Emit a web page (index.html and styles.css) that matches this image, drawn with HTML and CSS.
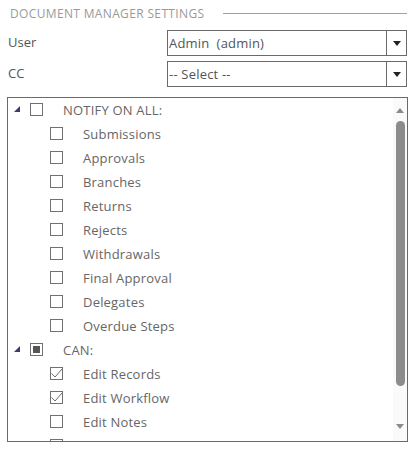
FILE: index.html
```html
<!DOCTYPE html>
<html>
<head>
<meta charset="utf-8">
<link rel="stylesheet" href="styles.css">
</head>
<body>
<div class="page">
  <div class="section-head">
    <span class="section-title">DOCUMENT MANAGER SETTINGS</span>
    <span class="section-line"></span>
  </div>
  <div class="field">
    <span class="field-label">User</span>
    <div class="select">
      <span class="select-value">Admin&nbsp; (admin)</span>
      <span class="select-btn"><span class="caret"></span></span>
    </div>
  </div>
  <div class="field">
    <span class="field-label">CC</span>
    <div class="select">
      <span class="select-value">-- Select --</span>
      <span class="select-btn"><span class="caret"></span></span>
    </div>
  </div>
  <div class="tree-box">
    <div class="tree">
      <div class="row parent">
        <span class="toggle"></span>
        <span class="cb"></span>
        <span class="txt">NOTIFY ON ALL:</span>
      </div>
      <div class="row child"><span class="cb"></span><span class="txt">Submissions</span></div>
      <div class="row child"><span class="cb"></span><span class="txt">Approvals</span></div>
      <div class="row child"><span class="cb"></span><span class="txt">Branches</span></div>
      <div class="row child"><span class="cb"></span><span class="txt">Returns</span></div>
      <div class="row child"><span class="cb"></span><span class="txt">Rejects</span></div>
      <div class="row child"><span class="cb"></span><span class="txt">Withdrawals</span></div>
      <div class="row child"><span class="cb"></span><span class="txt">Final Approval</span></div>
      <div class="row child"><span class="cb"></span><span class="txt">Delegates</span></div>
      <div class="row child"><span class="cb"></span><span class="txt">Overdue Steps</span></div>
      <div class="row parent">
        <span class="toggle"></span>
        <span class="cb partial"><span class="fill"></span></span>
        <span class="txt">CAN:</span>
      </div>
      <div class="row child"><span class="cb"><svg class="tick" viewBox="0 0 13 13" width="13" height="13"><path d="M1.5 6.5 L5 10 L12 2" fill="none" stroke="#6e6e6e" stroke-width="1"/></svg></span><span class="txt">Edit Records</span></div>
      <div class="row child"><span class="cb"><svg class="tick" viewBox="0 0 13 13" width="13" height="13"><path d="M1.5 6.5 L5 10 L12 2" fill="none" stroke="#6e6e6e" stroke-width="1"/></svg></span><span class="txt">Edit Workflow</span></div>
      <div class="row child"><span class="cb"></span><span class="txt">Edit Notes</span></div>
      <div class="row child"><span class="cb"><svg class="tick" viewBox="0 0 13 13" width="13" height="13"><path d="M1.5 6.5 L5 10 L12 2" fill="none" stroke="#6e6e6e" stroke-width="1"/></svg></span><span class="txt">Edit Settings</span></div>
    </div>
    <div class="scrollbar">
      <span class="arrow up"></span>
      <span class="thumb"></span>
      <span class="arrow down"></span>
    </div>
  </div>
</div>
</body>
</html>
```
FILE: styles.css
```css
html, body {
  margin: 0;
  padding: 0;
  background: #ffffff;
}
body {
  font-family: "Open Sans", "Liberation Sans", sans-serif;
  font-size: 13px;
  color: #666666;
}
.page {
  width: 413px;
  height: 451px;
  overflow: hidden;
}
.section-head {
  display: flex;
  align-items: center;
  height: 26px;
  padding-left: 10px;
  padding-right: 6px;
}
.section-title {
  font-size: 12px;
  color: #9a9a9a;
  letter-spacing: 0.35px;
  white-space: nowrap;
}
.section-line {
  flex: 1;
  height: 1px;
  background: #a0a0a0;
  margin-left: 19px;
}
.field {
  display: flex;
  align-items: center;
  height: 26px;
  margin-top: 4px;
  padding-left: 8px;
}
.field + .field {
  margin-top: 5px;
}
.field-label {
  width: 159px;
  color: #555555;
  font-size: 13px;
  position: relative;
  top: -1px;
}
.select {
  display: flex;
  width: 240px;
  height: 26px;
  box-sizing: border-box;
  border: 1px solid #6a6a6a;
  background: #fff;
}
.select-value {
  flex: 1;
  display: flex;
  align-items: center;
  padding-left: 1px;
  color: #555555;
  font-size: 13px;
  letter-spacing: 0.2px;
}
.select-btn {
  width: 19px;
  border-left: 1px solid #6a6a6a;
  display: flex;
  align-items: center;
  justify-content: center;
}
.caret {
  width: 0;
  height: 0;
  border-left: 4px solid transparent;
  border-right: 4px solid transparent;
  border-top: 5px solid #222;
}
.tree-box {
  display: flex;
  margin-top: 10px;
  margin-left: 7px;
  width: 401px;
  height: 345px;
  box-sizing: border-box;
  border: 1px solid #6a6a6a;
  overflow: hidden;
}
.tree {
  flex: 1;
  overflow: hidden;
}
.row {
  display: flex;
  align-items: flex-start;
  height: 24px;
}
.cb {
  display: block;
  position: relative;
  width: 13px;
  height: 13px;
  box-sizing: border-box;
  border: 1px solid #707070;
  margin-top: 5px;
  flex: none;
}
.tick {
  position: absolute;
  left: -1px;
  top: -1px;
}
.txt {
  line-height: 24px;
  margin-left: 20px;
  color: #666666;
  white-space: nowrap;
  letter-spacing: 0.2px;
}
.parent {
  padding-left: 6px;
}
.toggle {
  width: 0;
  height: 0;
  margin-top: 8px;
  border-left: 6px solid transparent;
  border-bottom: 6px solid #3c3c6e;
  margin-right: 10px;
  flex: none;
}
.child {
  padding-left: 42px;
}
.partial {
  padding: 2px;
}
.fill {
  display: block;
  width: 7px;
  height: 7px;
  background: #555555;
}
.scrollbar {
  width: 14px;
  flex: none;
  background: #fafafa;
  display: flex;
  flex-direction: column;
  align-items: center;
}
.arrow {
  width: 0;
  height: 0;
  border-left: 4px solid transparent;
  border-right: 4px solid transparent;
  flex: none;
}
.arrow.up {
  margin-top: 10px;
  border-bottom: 5px solid #8a8a8a;
}
.arrow.down {
  margin-top: 38px;
  border-top: 5px solid #8a8a8a;
}
.thumb {
  width: 9px;
  height: 265px;
  margin-top: 8px;
  border-radius: 5px;
  background: #8c8c8c;
  flex: none;
}
```
